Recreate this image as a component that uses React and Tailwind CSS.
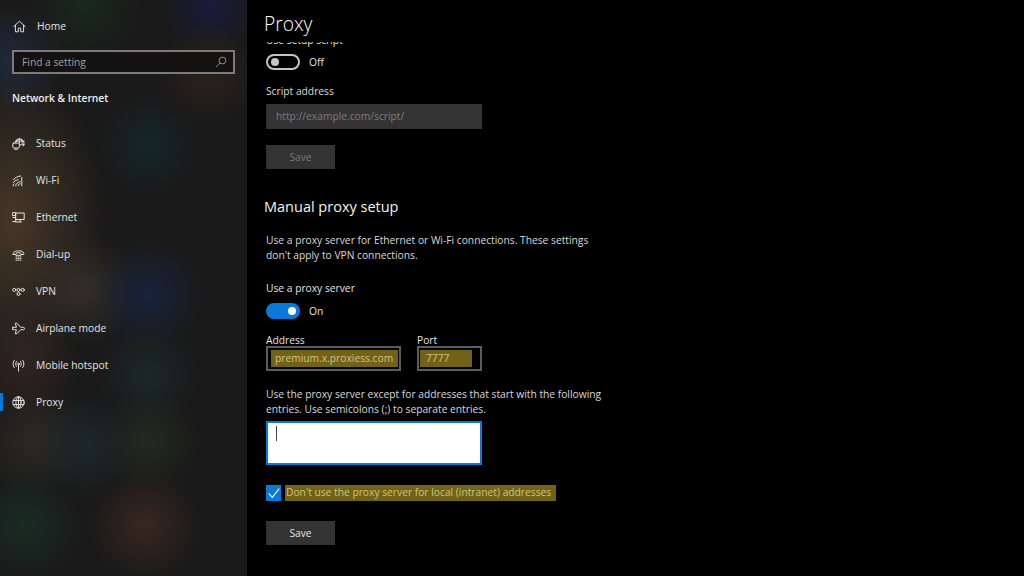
import React from "react";

const S = ({ children, vb = "0 0 16 16", cls = "w-[13px] h-[13px]" }) => (
  <svg viewBox={vb} className={cls} fill="none" stroke="#e4e4e4" strokeWidth="1.200" strokeLinecap="round" strokeLinejoin="round">{children}</svg>
);

const icons = {
  Home: <S><path d="M1 8 8 1.500 15 8M3 6.500V14.500h3.500V10h3v4.500H13V6.500" /></S>,
  Status: <S><path d="M4 7a5.500 5.500 0 1 1 10 4M9 1.500V8M4 5h11M6.500 2.500C6 3.500 5.800 4.500 5.800 6M11.500 2.500c.8 1.400 1 3 1 5.500M15 9.500H9" /><rect x="1" y="7.500" width="8" height="6" rx="1" fill="#2a2620" /><path d="M3 15h4" /></S>,
  "Wi-Fi": <S><path d="M1.500 14.500c0-1 .5-2 1.200-2.500M1.500 10.500C3 8.500 5 7.500 7.500 7M1.500 7C4 4.500 7 3 10.500 2.500M4.500 14.500C5 12 7 10 10 9.500M7.500 14.500c.2-1.200 1-2.200 2.500-2.500M12 14.500V4" strokeDasharray="1.500 .7" /></S>,
  Ethernet: <S><rect x="5" y="2.500" width="10" height="8" /><path d="M1 2h3.500v3.500H1zM1 8h3.500v5H1M10 10.500V13M4.500 13.500h7" /></S>,
  "Dial-up": <S><path d="M1.500 6.500C1.500 2.500 14.500 2.500 14.500 6.500v1.500h-3.500V6.500C10 5.500 6 5.500 5 6.500V8H1.500zM5 9h6" /><path d="M5 11h6M5 13h6M5 15h6" strokeDasharray="1 1.500" /></S>,
  VPN: <S><circle cx="2.800" cy="6" r="1.900" /><circle cx="8" cy="6" r="1.900" /><circle cx="13.200" cy="6" r="1.900" /><circle cx="8" cy="11" r="1.900" /></S>,
  "Airplane mode": <S><path d="M1 6.500h4.500L4 1.500h2l4.500 5H14c2 0 2 3 0 3h-3.500L6 14.500H4l1.500-5H1V8.800h-.5V7.300H1z" /></S>,
  "Mobile hotspot": <S><circle cx="8" cy="6" r="1" /><path d="M8 7v8M5.500 3c-1.200 1.800-1.200 4.200 0 6M10.500 3c1.200 1.800 1.200 4.200 0 6M2.800 1.500c-2 3-2 6 0 9M13.200 1.500c2 3 2 6 0 9" /></S>,
  Proxy: <S><circle cx="8" cy="8" r="7" /><ellipse cx="8" cy="8" rx="3.200" ry="7" /><path d="M1.500 5.500h13M1.500 10.500h13M8 1v14" /></S>,
};

const items = ["Status", "Wi-Fi", "Ethernet", "Dial-up", "VPN", "Airplane mode", "Mobile hotspot", "Proxy"];

function Toggle({ on }) {
  return on ? (
    <span className="w-[34px] h-[16px] rounded-full bg-[#0a78d7] flex items-center justify-end pr-[4px]">
      <span className="w-[8px] h-[8px] rounded-full bg-white" />
    </span>
  ) : (
    <span className="w-[34px] h-[16px] rounded-full border-2 border-[#c4c4c4] flex items-center pl-[3px]">
      <span className="w-[8px] h-[8px] rounded-full bg-[#c4c4c4]" />
    </span>
  );
}

export default function App() {
  return (
    <div className="flex w-[1024px] h-[576px] overflow-hidden bg-black text-[#e2e2e2] text-[10.250px] leading-[15px] font-['Open_Sans','Noto_Sans',sans-serif]">
      <aside className="w-[247px] shrink-0 flex flex-col bg-[#1a1a1a] bg-[radial-gradient(circle_at_208px_75px,#2c211b_0,transparent_50px),radial-gradient(circle_at_148px_145px,#142628_0,transparent_50px),radial-gradient(circle_at_148px_295px,#17223b_0,transparent_55px),radial-gradient(circle_at_85px_290px,#332e27_0,transparent_55px),radial-gradient(circle_at_148px_375px,#1b2828_0,transparent_50px),radial-gradient(circle_at_85px_445px,#1c282c_0,transparent_50px),radial-gradient(circle_at_148px_440px,#232a20_0,transparent_50px),radial-gradient(circle_at_145px_525px,#38271f_0,transparent_55px),radial-gradient(circle_at_25px_525px,#182c24_0,transparent_55px),radial-gradient(circle_at_35px_440px,#2d2a23_0,transparent_55px),radial-gradient(ellipse_90px_150px_at_15px_220px,#463727_0,transparent_100%),radial-gradient(circle_at_210px_5px,#1a1a3c_0,transparent_50px),radial-gradient(circle_at_85px_5px,#18281e_0,transparent_55px),radial-gradient(circle_at_10px_60px,#20283a_0,transparent_55px),radial-gradient(circle_at_25px_365px,#31231f_0,transparent_55px)]">
        <div className="h-[50px] shrink-0 flex items-center pl-[13px] gap-[11px] pt-[2px]">
          <span className="w-[13px] h-[13px] block">{icons.Home}</span>
          <span>Home</span>
        </div>
        <div className="mx-[12px] h-[24px] shrink-0 border-2 border-[#7b7b7b] bg-[#141210] flex items-center justify-between pl-[8px] pr-[6px] text-[#a0a0a0]">
          <span>Find a setting</span>
          <svg viewBox="0 0 16 16" className="w-[12px] h-[12px]" fill="none" stroke="#a5a5a5" strokeWidth="1.100"><circle cx="10" cy="6" r="4.500" /><path d="M6.800 9.200 1.500 14.500" /></svg>
        </div>
        <div className="mt-[17px] pl-[12px] h-[15px] font-semibold text-[#f0f0f0]">Network &amp; Internet</div>
        <nav className="mt-[19px] flex flex-col">
          {items.map((n) => (
            <div key={n} className="relative h-[37px] flex items-center pl-[12px] gap-[11px]">
              {n === "Proxy" && <span className="absolute left-0 top-[9px] w-[3px] h-[18px] bg-[#0a78d7]" />}
              <span className="w-[13px] h-[13px] flex items-center justify-center">{icons[n]}</span>
              <span>{n}</span>
            </div>
          ))}
        </nav>
      </aside>

      <main className="flex-1 flex flex-col pl-[15px] min-w-0">
        <div className="h-[42px] shrink-0 pt-[9px] pl-[2px] text-[19.200px] leading-[30px] font-light text-white">Proxy</div>
        <div className="flex-1 overflow-hidden w-[349px] pl-[4px]">
          <div className="-mt-[9px] flex flex-col items-start">
            <div className="h-[15px]">Use setup script</div>
            <div className="mt-[6px] flex items-center gap-[9px] h-[16px]"><Toggle /><span>Off</span></div>
            <div className="mt-[14px] text-[#d8d8d8]">Script address</div>
            <div className="mt-[5px] w-[216px] h-[25px] bg-[#333333] flex items-center pl-[10px] text-[#7d7d7d]">http://example.com/script/</div>
            <div className="mt-[16px] w-[69px] h-[24px] bg-[#333333] flex items-center justify-center text-[#7a7a7a]">Save</div>
            <h2 className="mt-[27px] -ml-[2px] text-[14.500px] leading-[22px] text-[#f2f2f2]">Manual proxy setup</h2>
            <p className="mt-[15px] leading-[15px] text-[#d8d8d8] whitespace-nowrap">Use a proxy server for Ethernet or Wi-Fi connections. These settings<br />don't apply to VPN connections.</p>
            <div className="mt-[18px]">Use a proxy server</div>
            <div className="mt-[7px] flex items-center gap-[9px] h-[16px]"><Toggle on /><span>On</span></div>
            <div className="mt-[14px] flex gap-[16px]">
              <div className="flex flex-col">
                <span className="h-[13px]">Address</span>
                <div className="w-[135px] h-[25px] border-2 border-[#5c5c5c] p-[2px] pl-[3px]">
                  <div className="h-full w-[127px] bg-[#726217] flex items-center pl-[4px] text-[#cfc380] whitespace-nowrap">premium.x.proxiess.com</div>
                </div>
              </div>
              <div className="flex flex-col">
                <span className="h-[13px]">Port</span>
                <div className="w-[65px] h-[25px] border-2 border-[#5c5c5c] p-[2px] pl-[1px]">
                  <div className="h-full w-[52px] bg-[#726217] flex items-center pl-[6px] text-[#cfc380]">7777</div>
                </div>
              </div>
            </div>
            <p className="mt-[16px] text-[#d8d8d8] whitespace-nowrap">Use the proxy server except for addresses that start with the following<br />entries. Use semicolons (;) to separate entries.</p>
            <div className="mt-[4px] w-[216px] h-[44px] bg-white border-2 border-[#0a78d7] pl-[8px] pt-[3px]">
              <div className="w-[1px] h-[15px] bg-[#444]" />
            </div>
            <div className="mt-[19px] flex items-center gap-[4px] h-[17px]">
              <span className="w-[15px] h-[16px] bg-[#0a78d7] flex items-center justify-center">
                <svg viewBox="0 0 16 16" className="w-[14px] h-[14px]" fill="none" stroke="#fff" strokeWidth="1.200"><path d="M2 8.500 6 13l8-10" /></svg>
              </span>
              <span className="bg-[#726217] text-[#cfc380] h-[16px] w-[271px] flex items-center pl-[1px] whitespace-nowrap">Don't use the proxy server for local (intranet) addresses</span>
            </div>
            <div className="mt-[20px] w-[69px] h-[24px] bg-[#333333] flex items-center justify-center text-[#e6e6e6]">Save</div>
          </div>
        </div>
      </main>
    </div>
  );
}
